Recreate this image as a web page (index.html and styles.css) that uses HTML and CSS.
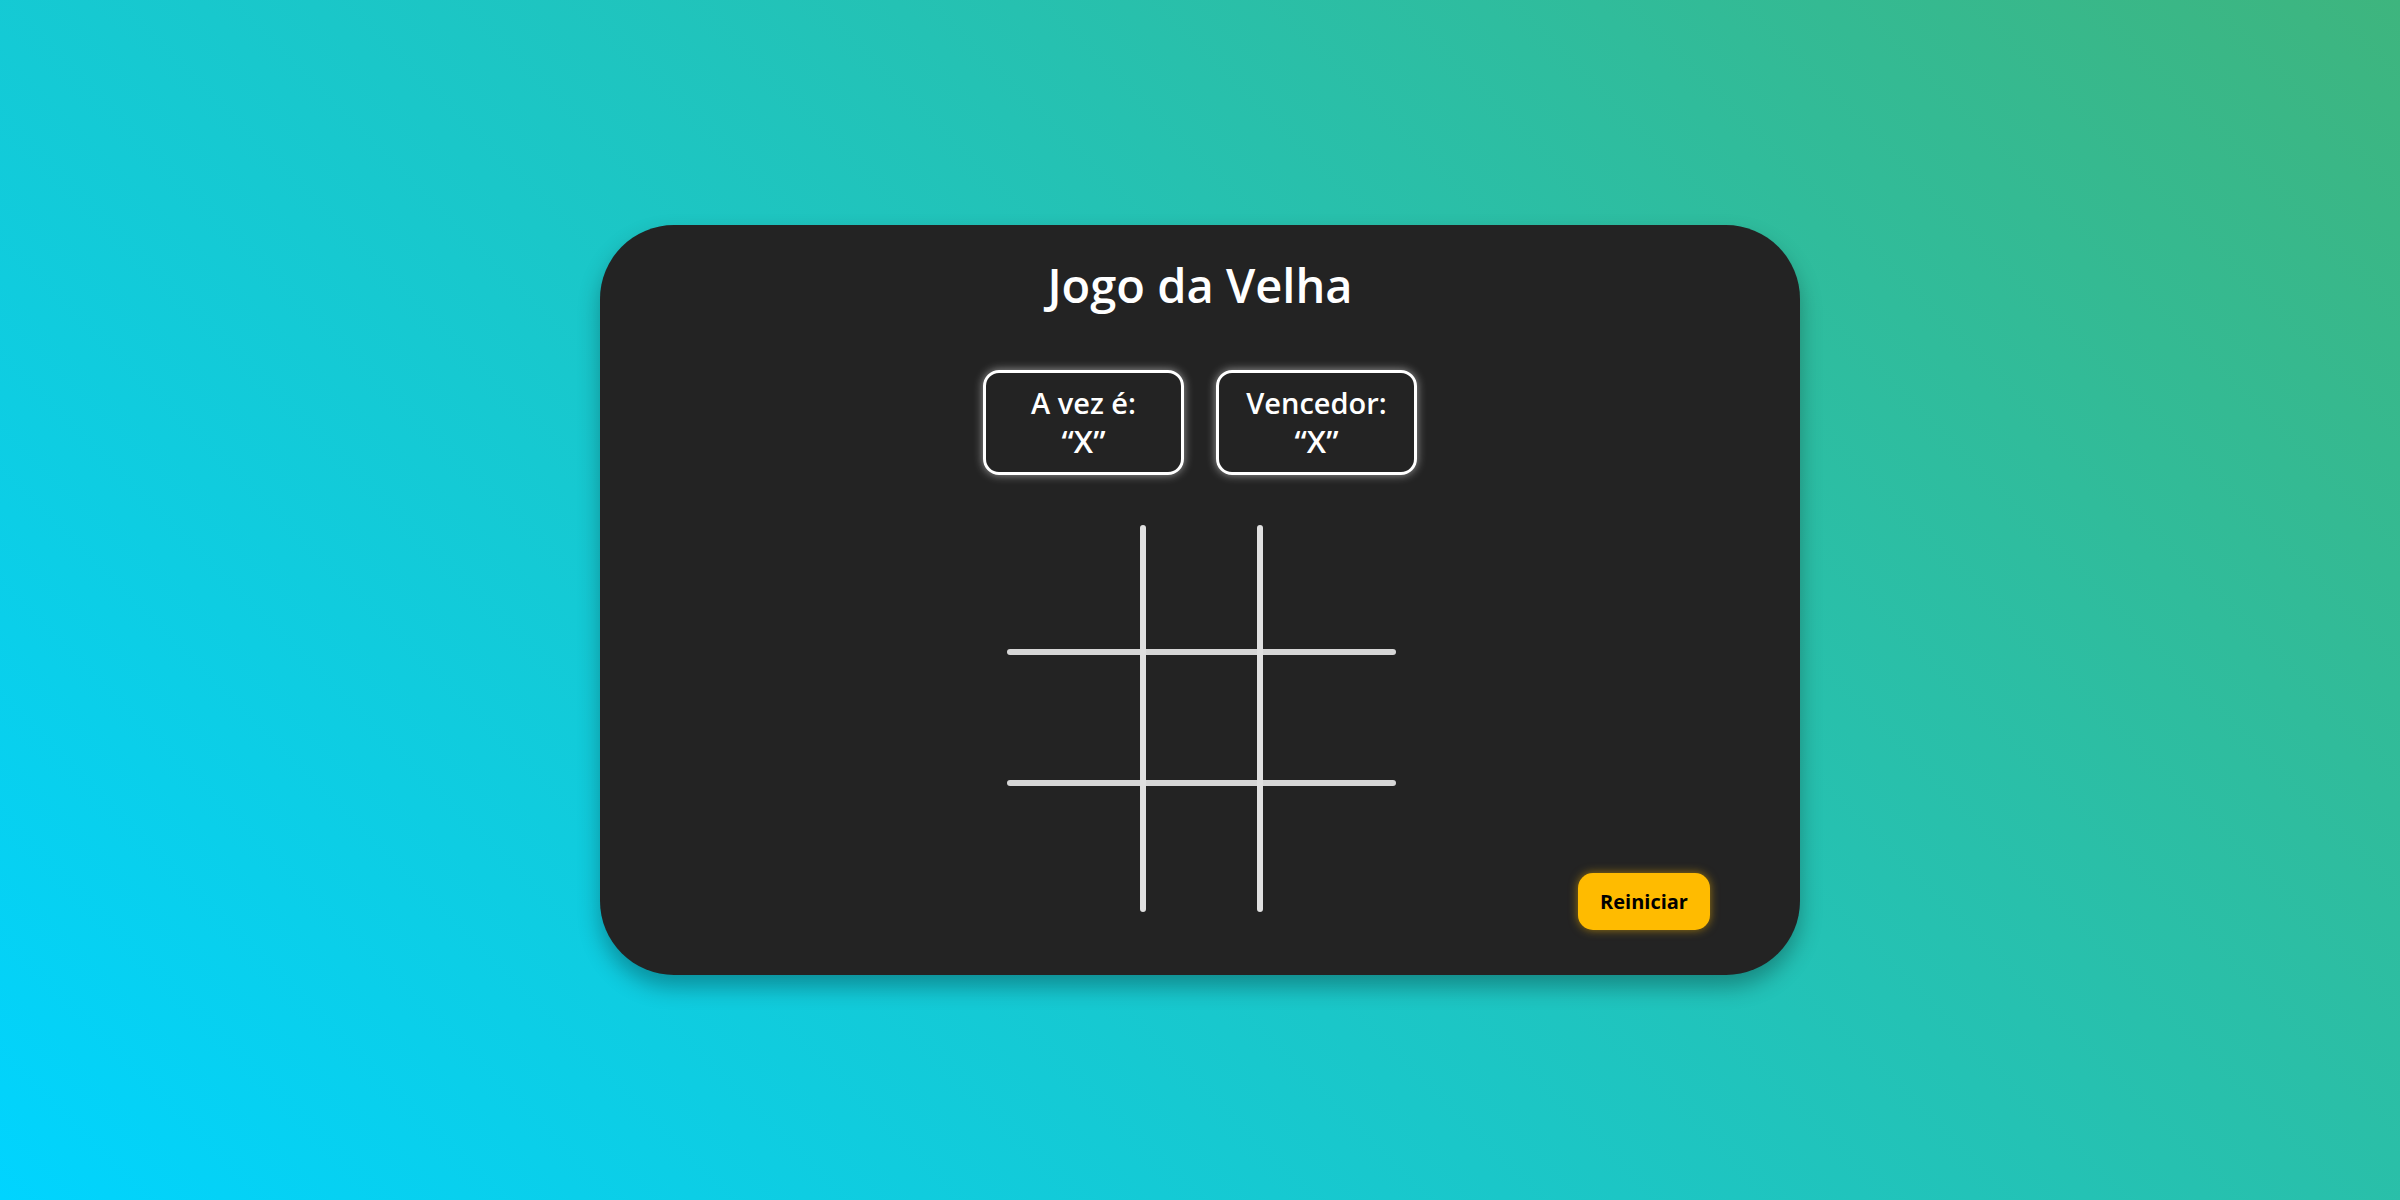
FILE: index.html
```html
<!DOCTYPE html>
<html lang="pt-BR">
<head>
<meta charset="utf-8">
<title>Jogo da Velha</title>
<link rel="stylesheet" href="styles.css">
</head>
<body>
<main class="card">
  <h1 class="title">Jogo da Velha</h1>
  <div class="info">
    <div class="info-box">A vez é:<br><span class="mark">“X”</span></div>
    <div class="info-box">Vencedor:<br><span class="mark">“X”</span></div>
  </div>
  <svg class="board" width="400" height="387" viewBox="0 0 400 387">
    <g stroke="#d6d6d6" stroke-width="6" stroke-linecap="round">
      <line x1="10" y1="127" x2="393" y2="127"/>
      <line x1="10" y1="258" x2="393" y2="258"/>
    </g>
    <g stroke="#e0e0e0" stroke-width="6" stroke-linecap="round">
      <line x1="143" y1="3" x2="143" y2="384"/>
      <line x1="260" y1="3" x2="260" y2="384"/>
    </g>
  </svg>
  <button class="restart">Reiniciar</button>
</main>
</body>
</html>
```
FILE: styles.css
```css
html, body {
  margin: 0;
  height: 100%;
}
body {
  background: linear-gradient(45deg, #00d4ff, #3eb57e);
  display: flex;
  align-items: center;
  justify-content: center;
  font-family: "Open Sans", "Noto Sans", sans-serif;
}
.card {
  position: relative;
  box-sizing: border-box;
  width: 1200px;
  height: 750px;
  background: #232323;
  border-radius: 74px;
  box-shadow: 0 12px 22px rgba(0, 0, 0, 0.3);
  display: flex;
  flex-direction: column;
  align-items: center;
  padding-top: 37px;
}
.title {
  margin: 0;
  color: #ffffff;
  font-size: 47px;
  font-weight: 600;
  line-height: 46px;
}
.info {
  display: flex;
  gap: 32px;
  margin-top: 62px;
}
.info-box {
  box-sizing: border-box;
  width: 201px;
  height: 105px;
  border: 3px solid #ffffff;
  border-radius: 16px;
  box-shadow: 0 0 10px rgba(255, 255, 255, 0.55);
  color: #ffffff;
  font-size: 29px;
  font-weight: 600;
  line-height: 38px;
  text-align: center;
  padding-top: 11px;
}
.mark {
  font-size: 31px;
  font-weight: 600;
}
.board {
  display: block;
  margin-top: 50px;
}
.restart {
  position: absolute;
  right: 90px;
  bottom: 45px;
  width: 132px;
  height: 57px;
  border: none;
  border-radius: 15px;
  background: #ffbb00;
  box-shadow: 0 0 10px rgba(255, 187, 0, 0.55);
  color: #000000;
  font-family: "Open Sans", "Noto Sans", sans-serif;
  font-size: 20px;
  font-weight: 700;
  padding: 0;
}
```
